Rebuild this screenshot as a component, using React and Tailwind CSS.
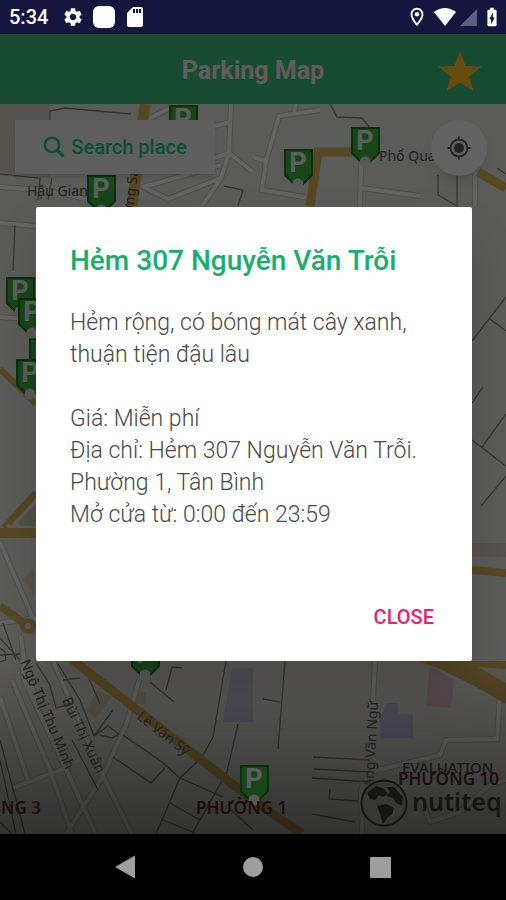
import React, { useState } from "react";
import { MdSettings, MdSdCard, MdOutlineLocationOn, MdBatteryChargingFull } from "react-icons/md";

const minorRoads = [
  "M0 187 L42 190 L75 196 L100 205",
  "M214 126 L231 122 M253 172 L229 153 L214 158 M231 104 L229 153 L221 178 L202 206 M221 178 L168 199 L143 187 M143 187 L221 165 M150 118 L178 104",
  "M253 157 L266 161 L262 190 L310 198 M266 161 L279 116 L320 110 M296 104 L294 112",
  "M361 165 L360 206 M361 188 L420 196",
  "M475 172 L475 206",
  "M0 223 L36 226 M0 317 L36 320",
  "M0 542 L36 625 M0 623 L36 618 M21 636 L24 660 L36 700",
  "M22 660 L24 680 L96 834 M12 680 L50 770 L72 834 M0 697 L28 780",
  "M53 661 L103 776 L132 834",
  "M140 677 L126 725 L103 776 L66 834",
  "M12 788 L66 768 L80 800",
  "M375 661 L373 700 M370 772 L440 755 L446 740 L497 739 L502 665",
  "M362 834 L361 790 L370 772 M421 800 L430 822 L460 812 L490 785 L506 780",
];

const darkLines = [
  "M50 133 L50 111 L65 108 L131 114",
  "M0 174 L40 178 L38 200 M48 200 L52 178",
  "M330 104 L337 117 L362 118 L370 128",
  "M438 175 L438 195 L457 206 M457 172 L457 206 M497 168 L506 174",
  "M224 186 L243 190 L238 206",
  "M472 341 L506 297 M490 319 L506 331 M472 403 L483 387 M472 440 L506 466 M481 506 L506 476 M482 447 L506 414",
  "M15 225 L13 271",
  "M0 648 L5 652 L6 660 L0 662 M0 655 L20 654 M0 740 L25 834 M0 760 L16 834",
  "M36 663 L50 685 L56 708 L72 704 M58 664 L80 700 L94 736 M80 678 L63 680 M94 736 L113 710 M94 736 L108 726 L119 734 L112 738 L100 735",
  "M150 682 L174 702 M166 690 L172 667 L182 668",
  "M123 735 L162 762 L180 778 L223 797 M113 757 L151 783 L165 768",
  "M226 661 L213 737 L202 757 L180 778 L156 834",
  "M238 724 L227 772 L192 834 M170 803 L200 820 M163 820 L195 833",
  "M285 661 L278 749 M263 699 L280 702 M313 757 L370 760 M314 769 L370 772 M312 778 L370 782 M330 789 L329 799 L358 801 M312 814 L355 822",
  "M230 809 L253 830 M72 740 L98 790 M88 676 L100 704",
  "M0 822 L12 834 M3 623 L16 660 M0 638 L20 660",
];

const yellowRoads = [
  { d: "M145 104 L132 206", w: 11 },
  { d: "M310 206 L318 152 L352 152", w: 9 },
  { d: "M478 172 L506 188", w: 9 },
  { d: "M0 369 L36 404", w: 6 },
  { d: "M0 533 L36 533", w: 10 },
  { d: "M4 528 L36 493", w: 7 },
  { d: "M0 606 L28 626 L36 628", w: 8 },
  { d: "M60 650 L253 800 L302 834", w: 9 },
  { d: "M472 570 L506 573", w: 8 },
];

const pins = [
  { x: 169, y: 105 },
  { x: 87, y: 175 },
  { x: 284, y: 149 },
  { x: 351, y: 127 },
  { x: 29, y: 338 },
  { x: 6, y: 277 },
  { x: 18, y: 298 },
  { x: 16, y: 359 },
  { x: 131, y: 640 },
  { x: 240, y: 765 },
];

function Pin({ x, y }) {
  return (
    <g transform={`translate(${x} ${y})`}>
      <path d="M1 1 H28 V26 L19 35 H10 L1 26 Z" fill="#3fb03f" stroke="#147a22" strokeWidth="2" />
      <text x="14" y="23" textAnchor="middle" fontSize="27" fontWeight="700" fill="#e4efe0">P</text>
      <circle cx="14" cy="35" r="5.5" fill="#e0e2dd" />
    </g>
  );
}

function MapCanvas() {
  return (
    <svg
      className="absolute inset-0 h-full w-full font-['Noto_Sans',sans-serif]"
      viewBox="0 104 506 730"
      preserveAspectRatio="xMidYMid slice"
      aria-label="Map"
    >
      <defs>
        <linearGradient id="fade" x1="0" y1="0" x2="0" y2="1">
          <stop offset="0" stopColor="#000" stopOpacity="0" />
          <stop offset="1" stopColor="#000" stopOpacity="0.45" />
        </linearGradient>
      </defs>
      <rect x="0" y="104" width="506" height="730" fill="#e4e3de" />
      <path d="M0 104 H50 V178 L0 172 Z" fill="#d8d0c2" />
      <path d="M18 522 L36 504 V526 H20 Z" fill="#c5d0b0" />
      <path d="M22 580 L34 568 V596 Z" fill="#ddd3bf" />
      <path d="M98 690 L112 697 L96 718 L86 710 Z" fill="#dccdbd" />
      <path d="M134 692 H146 V704 H134 Z" fill="#dccbc5" />
      <path d="M232 668 H253 V722 H223 Z" fill="#ccc9dc" />
      <path d="M387 703 H398 V714 H413 V738 H380 V718 Z" fill="#cbc6df" />
      <path d="M430 665 L454 680 L451 708 L426 706 Z" fill="#dfc5d1" />
      <path d="M472 543 H506 V557 H472 Z" fill="#d5cec5" />

      <g fill="none" stroke="#c2c2be" strokeWidth="6">
        {minorRoads.map(d => <path key={d} d={d} />)}
      </g>
      <g fill="none" stroke="#f5f5f2" strokeWidth="4">
        {minorRoads.map(d => <path key={d} d={d} />)}
      </g>
      <g fill="none" stroke="#868681" strokeWidth="1.3">
        {darkLines.map(d => <path key={d} d={d} />)}
      </g>
      <g fill="none" stroke="#d9b35a">
        {yellowRoads.map(r => <path key={r.d} d={r.d} strokeWidth={r.w} />)}
      </g>
      <path d="M418 661 L506 661 V704 L478 688 L438 668 Z" fill="#d3af5c" />
      <path d="M478 667 L506 669 V683 Z" fill="#ddd9d0" />
      <circle cx="28" cy="626" r="8" fill="#d9b35a" />
      <circle cx="28" cy="626" r="3" fill="#e9e8e3" />
      <circle cx="9" cy="526" r="2" fill="#e9e8e3" />

      <rect x="0" y="660" width="506" height="174" fill="url(#fade)" />

      <g className="font-['Roboto',sans-serif]">
        {pins.map(p => <Pin key={`${p.x}-${p.y}`} x={p.x} y={p.y} />)}
      </g>

      <g fontSize="14" fill="#55554f">
        <text x="27" y="196">Hậu Gian</text>
        <text x="379" y="161">Phổ Quang</text>
        <text transform="translate(133 214) rotate(-83)">ờng Sa</text>
        <text transform="translate(20 662) rotate(67)">Ngô Thị Thu Minh</text>
        <text transform="translate(62 700) rotate(65)">Bùi Thị Xuân</text>
        <text transform="translate(136 718) rotate(38)">Lê Văn Sỹ</text>
        <text transform="translate(373 797) rotate(-87)">Đặng Văn Ngữ</text>
      </g>

      <g fontSize="17" fontWeight="600" fill="#4b2422">
        <text x="1" y="814">NG 3</text>
        <text x="196" y="814">PHƯỜNG 1</text>
        <text x="398" y="785">PHƯỜNG 10</text>
      </g>

      <text x="402" y="773" fontSize="15" fontWeight="500" fill="#3c3c3a">EVALUATION</text>
      <circle cx="384" cy="803" r="22.5" fill="#8b8b87" stroke="#353532" strokeWidth="2" />
      <path d="M367 793 L376 786 L384 789 L388 794 L383 797 L379 795 L375 800 L370 799 Z" fill="#353532" />
      <path d="M377 806 L386 804 L394 808 L392 815 L388 817 L383 824 L380 814 Z" fill="#353532" />
      <path d="M387 787 L394 787 L403 797 L402 806 L396 803 L393 798 L386 796 L390 792 Z" fill="#353532" />
      <text x="412" y="811" fontSize="25" fontWeight="600" fill="#353532">nutiteq</text>
    </svg>
  );
}

function StatusBar() {
  return (
    <div className="flex h-[34px] shrink-0 items-center justify-between bg-[#14163f] pl-[9px] pr-[3px] text-white">
      <div className="flex items-center">
        <span className="text-xl font-medium">5:34</span>
        <MdSettings className="ml-3.5 size-[22px]" />
        <span className="ml-[9px] size-[22px] rounded-md bg-white" />
        <MdSdCard className="ml-2 size-6" />
      </div>
      <div className="flex items-center">
        <MdOutlineLocationOn className="mr-1.5 size-[22px]" />
        <svg className="mr-1 h-[18px] w-[22px]" viewBox="0 0 22 18" fill="currentColor" aria-hidden="true">
          <path d="M11 18 L0 4 Q11 -4 22 4 Z" />
        </svg>
        <svg className="mr-1 size-[17px]" viewBox="0 0 17 17" fill="#5d5f80" aria-hidden="true">
          <path d="M0 17 L17 0 V17 Z" />
        </svg>
        <MdBatteryChargingFull className="size-[22px]" />
      </div>
    </div>
  );
}

function NavBar() {
  return (
    <nav className="grid h-[66px] shrink-0 grid-cols-3 items-center justify-items-center bg-black px-[62px]">
      <button aria-label="Back">
        <svg className="size-6" viewBox="0 0 24 24" fill="#9e9e9e"><path d="M1 12 L21 0.5 V23.5 Z" /></svg>
      </button>
      <button aria-label="Home" className="size-5 rounded-full bg-[#9e9e9e]" />
      <button aria-label="Recent apps" className="size-[21px] rounded-[1px] bg-[#9e9e9e]" />
    </nav>
  );
}

export default function App() {
  const [open, setOpen] = useState(true);

  return (
    <div className="flex min-h-screen flex-col bg-black font-['Roboto',sans-serif]">
      <StatusBar />

      <div className="relative flex flex-1 flex-col">
        <header className="grid h-[70px] shrink-0 grid-cols-[1fr_auto_1fr] items-center bg-[#3cbe7d] px-6 pt-1">
          <h1 className="col-start-2 text-[25px] font-bold text-[#f4e6e6]">Parking Map</h1>
          <button aria-label="Favourites" className="justify-self-end">
            <svg className="size-11" viewBox="0 0 44 44" fill="#ffbe1e">
              <path d="M22 2 L27.5 17 L44 17.5 L31 27.5 L35.5 42 L22 33.5 L8.5 42 L13 27.5 L0 17.5 L16.5 17 Z" />
            </svg>
          </button>
        </header>

        <main className="relative flex flex-1 flex-col">
          <MapCanvas />
          <div className="relative flex items-start justify-between py-4 pl-[15px] pr-[19px]">
            <button className="flex h-[54px] w-[200px] items-center justify-center gap-1.5 bg-[#ebebeb] text-xl font-medium text-[#1cc688] shadow-md">
              <svg className="size-[22px]" viewBox="0 0 22 22" fill="none" stroke="currentColor" strokeWidth="2.6" aria-hidden="true">
                <circle cx="9" cy="9" r="7.2" />
                <path d="M14 14 L20.5 20.5" strokeWidth="3.2" />
              </svg>
              Search place
            </button>
            <button aria-label="My location" className="flex size-14 items-center justify-center rounded-full bg-[#f4f4f4] shadow-lg">
              <svg className="size-6" viewBox="0 0 24 24" fill="none" stroke="#555" strokeWidth="1.8">
                <circle cx="12" cy="12" r="8.5" />
                <circle cx="12" cy="12" r="5" fill="#555" stroke="none" />
                <path d="M12 0.5 V4 M12 20 V23.5 M0.5 12 H4 M20 12 H23.5" />
              </svg>
            </button>
          </div>
        </main>

        {open && (
          <div className="absolute inset-0 flex items-center justify-center bg-black/60 pl-9 pr-[34px]">
            <section
              role="dialog"
              aria-labelledby="place-name"
              className="flex w-full flex-col rounded-xs bg-white px-[34px] pt-9 pb-5 shadow-2xl"
            >
              <h2 id="place-name" className="text-[28px] leading-9 font-medium text-[#17ae6e]">
                Hẻm 307 Nguyễn Văn Trỗi
              </h2>
              <div className="mt-7 text-[23px] leading-8 font-light text-[#484848]">
                <p>Hẻm rộng, có bóng mát cây xanh, thuận tiện đậu lâu</p>
                <p className="mt-8">Giá: Miễn phí</p>
                <p>Địa chỉ: Hẻm 307 Nguyễn Văn Trỗi. Phường 1, Tân Bình</p>
                <p>Mở cửa từ: 0:00 đến 23:59</p>
              </div>
              <button
                onClick={() => setOpen(false)}
                className="mt-[62px] self-end py-2 pr-1 text-xl leading-8 font-medium text-[#f01c6c]"
              >
                CLOSE
              </button>
            </section>
          </div>
        )}
      </div>

      <NavBar />
    </div>
  );
}
